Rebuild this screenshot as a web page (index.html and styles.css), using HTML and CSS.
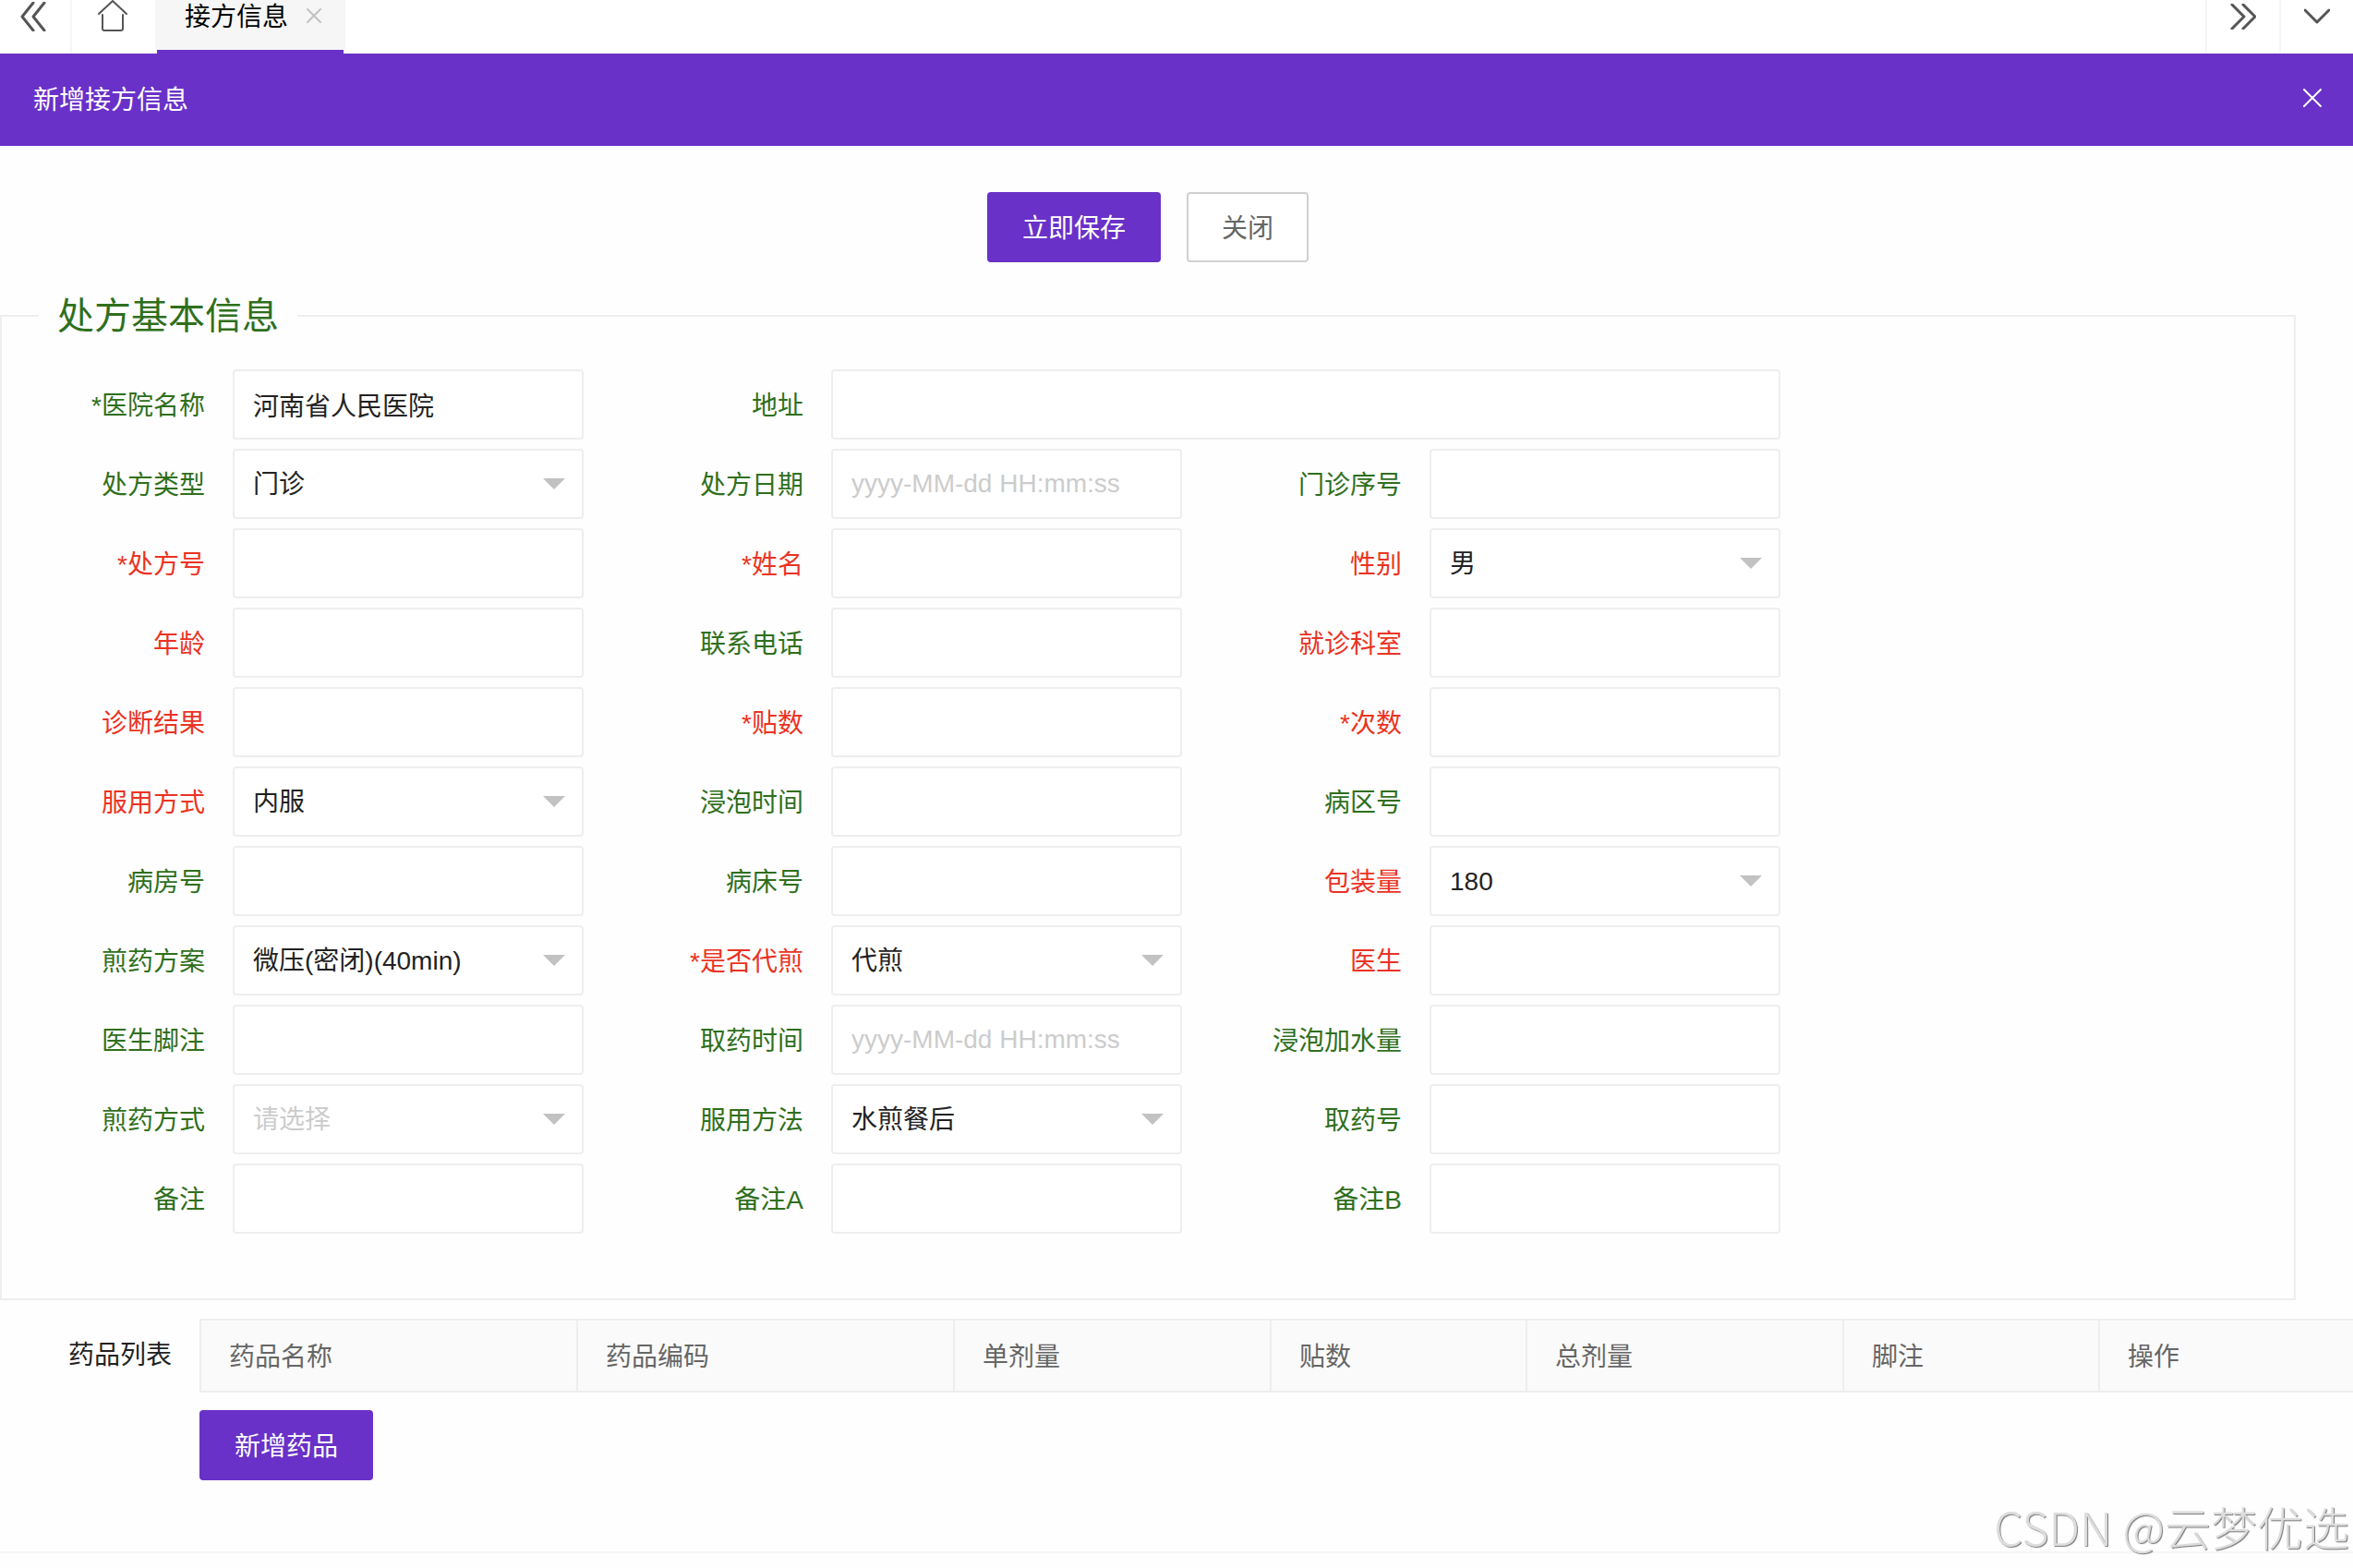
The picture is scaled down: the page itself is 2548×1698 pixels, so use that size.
FILE: index.html
```html
<!DOCTYPE html>
<html lang="zh-CN">
<head>
<meta charset="utf-8">
<title>新增接方信息</title>
<link rel="stylesheet" href="styles.css">
</head>
<body>
<nav class="tabbar">
  <button type="button" class="tab-ctl ctl-prev" aria-label="向左滚动">
    <svg width="28" height="32" viewBox="0 0 28 32"><path d="M14 1L2 16l12 15M26 1L14 16l12 15"/></svg>
  </button>
  <a href="#" class="tab-home" aria-label="主页">
    <svg class="thin" width="32" height="34" viewBox="0 0 32 34"><path d="M1 15L16 1l15 14M5 16v15q0 2 2 2h18q2 0 2-2V16"/></svg>
  </a>
  <div class="tab">
    <a href="#" class="tab-link">接方信息</a>
    <button type="button" class="tab-close" aria-label="关闭标签">
      <svg class="thin" width="16" height="16" viewBox="0 0 16 16"><path d="M1 1l14 14M15 1L1 15"/></svg>
    </button>
  </div>
  <button type="button" class="tab-ctl ctl-next" aria-label="向右滚动">
    <svg width="28" height="28" viewBox="0 0 28 28"><path d="M2 1l13 13L2 27M14 1l13 13-13 13"/></svg>
  </button>
  <button type="button" class="tab-ctl ctl-more" aria-label="更多">
    <svg width="28" height="28" viewBox="0 0 28 28"><path d="M1 7l13 13L27 7"/></svg>
  </button>
</nav>

<header class="dialog-head">
  <h1 class="dialog-title">新增接方信息</h1>
  <button type="button" class="dialog-close" aria-label="关闭">
    <svg width="20" height="20" viewBox="0 0 20 20"><path d="M1 1l18 18M19 1L1 19"/></svg>
  </button>
</header>

<form class="form">
  <div class="actions">
    <button type="button" class="btn">立即保存</button>
    <button type="button" class="btn btn-plain">关闭</button>
  </div>

  <fieldset class="group">
    <legend>处方基本信息</legend>
    <div class="fields">
      <div class="field"><label for="hospital">*医院名称</label><input id="hospital" type="text" value="河南省人民医院"></div>
      <div class="field wide"><label for="address">地址</label><input id="address" type="text"></div>

      <div class="field"><label for="type">处方类型</label><div class="select"><select id="type"><option>门诊</option></select></div></div>
      <div class="field"><label for="date">处方日期</label><input id="date" type="text" placeholder="yyyy-MM-dd HH:mm:ss"></div>
      <div class="field"><label for="serial">门诊序号</label><input id="serial" type="text"></div>

      <div class="field key"><label for="number">*处方号</label><input id="number" type="text"></div>
      <div class="field key"><label for="name">*姓名</label><input id="name" type="text"></div>
      <div class="field key"><label for="sex">性别</label><div class="select"><select id="sex"><option>男</option></select></div></div>

      <div class="field key"><label for="age">年龄</label><input id="age" type="text"></div>
      <div class="field"><label for="phone">联系电话</label><input id="phone" type="text"></div>
      <div class="field key"><label for="dept">就诊科室</label><input id="dept" type="text"></div>

      <div class="field key"><label for="diagnosis">诊断结果</label><input id="diagnosis" type="text"></div>
      <div class="field key"><label for="doses">*贴数</label><input id="doses" type="text"></div>
      <div class="field key"><label for="times">*次数</label><input id="times" type="text"></div>

      <div class="field key"><label for="usage">服用方式</label><div class="select"><select id="usage"><option>内服</option></select></div></div>
      <div class="field"><label for="soak">浸泡时间</label><input id="soak" type="text"></div>
      <div class="field"><label for="ward">病区号</label><input id="ward" type="text"></div>

      <div class="field"><label for="room">病房号</label><input id="room" type="text"></div>
      <div class="field"><label for="bed">病床号</label><input id="bed" type="text"></div>
      <div class="field key"><label for="pack">包装量</label><div class="select"><select id="pack"><option>180</option></select></div></div>

      <div class="field"><label for="plan">煎药方案</label><div class="select"><select id="plan"><option>微压(密闭)(40min)</option></select></div></div>
      <div class="field key"><label for="decoct">*是否代煎</label><div class="select"><select id="decoct"><option>代煎</option></select></div></div>
      <div class="field key"><label for="doctor">医生</label><input id="doctor" type="text"></div>

      <div class="field"><label for="footnote">医生脚注</label><input id="footnote" type="text"></div>
      <div class="field"><label for="pickup">取药时间</label><input id="pickup" type="text" placeholder="yyyy-MM-dd HH:mm:ss"></div>
      <div class="field"><label for="water">浸泡加水量</label><input id="water" type="text"></div>

      <div class="field"><label for="mode">煎药方式</label><div class="select"><select id="mode" class="empty"><option>请选择</option></select></div></div>
      <div class="field"><label for="method">服用方法</label><div class="select"><select id="method"><option>水煎餐后</option></select></div></div>
      <div class="field"><label for="pickno">取药号</label><input id="pickno" type="text"></div>

      <div class="field"><label for="note">备注</label><input id="note" type="text"></div>
      <div class="field"><label for="notea">备注A</label><input id="notea" type="text"></div>
      <div class="field"><label for="noteb">备注B</label><input id="noteb" type="text"></div>
    </div>
  </fieldset>

  <section class="drugs">
    <h2 class="drugs-title" id="drugs-title">药品列表</h2>
    <div class="drugs-body">
      <table class="drug-table" aria-labelledby="drugs-title">
        <colgroup><col class="c-lg"><col class="c-lg"><col class="c-md"><col class="c-sm"><col class="c-md"><col class="c-sm"><col></colgroup>
        <thead>
          <tr><th>药品名称</th><th>药品编码</th><th>单剂量</th><th>贴数</th><th>总剂量</th><th>脚注</th><th>操作</th></tr>
        </thead>
      </table>
      <button type="button" class="btn">新增药品</button>
    </div>
  </section>
</form>
<div class="watermark">CSDN @云梦优选</div>
</body>
</html>
```

FILE: styles.css
```css
* { box-sizing: border-box; }

body {
  margin: 0;
  background: #fefefe;
  color: #222;
  font: 28px/40px "Liberation Sans", "Noto Sans CJK SC", sans-serif;
}

button, input, select { font: inherit; color: inherit; margin: 0; }
button { border: 0; padding: 0; background: none; cursor: pointer; }
a { color: inherit; text-decoration: none; }
svg { display: block; fill: none; stroke: currentColor; stroke-width: 3; stroke-linejoin: round; stroke-linecap: round; }
svg.thin { stroke-width: 2; }

/* tab strip */
.tabbar { display: flex; height: 58px; background: #fff; color: #555; }
.tab-ctl, .tab-home, .tab { display: flex; align-items: center; justify-content: center; padding-bottom: 22px; }
.tab-ctl { width: 80px; border-left: 2px solid #f6f6f6; }
.ctl-prev { width: 78px; padding-right: 4px; border-left: 0; border-right: 2px solid #f6f6f6; }
.ctl-next { margin-left: auto; }
.tab-home { width: 90px; padding-right: 2px; padding-bottom: 24px; }
.tab {
  gap: 20px;
  padding: 0 24px 20px 30px;
  border: 2px solid #f6f6f6;
  border-width: 0 2px;
  background: linear-gradient(#6931c8, #6931c8) bottom / 100% 4px no-repeat #f6f6f6;
  color: #000;
}
.tab-close { padding-bottom: 4px; color: #c2c2c2; }

/* dialog title bar */
.dialog-head {
  display: flex;
  align-items: center;
  justify-content: space-between;
  height: 100px;
  padding: 0 34px 0 36px;
  background: #6931c8;
  color: #fff;
}
.dialog-title { margin: 0; padding-top: 2px; font-size: 28px; font-weight: 400; }
.dialog-close { padding-bottom: 4px; }
.dialog-close svg { stroke-width: 2; }

/* buttons */
.btn {
  height: 76px;
  padding: 4px 38px 0;
  border-radius: 4px;
  background: #6931c8;
  color: #fff;
}
.btn-plain { padding: 4px 36px 0; border: 2px solid #d0d0d0; background: #fff; color: #666; }
.actions { display: flex; justify-content: center; gap: 28px; padding: 50px 62px 0 0; }

/* form */
.group { margin: 28px 62px 20px 0; padding: 28px 0 70px; border: 2px solid #eee; min-width: 0; }
.group legend { margin-left: 40px; padding: 0 20px; font-size: 40px; line-height: 60px; color: #2f6f1c; }
.fields { display: grid; grid-template-columns: repeat(3, 630px); gap: 10px 18px; }
.field { display: grid; grid-template-columns: 250px 1fr; align-items: center; color: #2f6f1c; }
.field.wide { grid-column: span 2; }
.field.key { color: #ea3323; }
.field label { padding: 4px 30px 0 0; text-align: right; }
.field input, .field select {
  width: 100%;
  height: 76px;
  padding: 0 20px;
  border: 2px solid #eee;
  border-radius: 4px;
  background: #fff;
  color: #222;
  outline: 0;
  appearance: none;
}
.field select { padding-top: 2px; }
.field input::placeholder { color: #ccc; opacity: 1; }
.field select.empty { color: #ccc; }
.select { display: grid; align-items: center; }
.select select, .select::after { grid-area: 1 / 1; }
.select::after {
  content: "";
  justify-self: end;
  margin-right: 20px;
  border: 12px solid transparent;
  border-top-color: #c2c2c2;
  border-bottom: 0;
  pointer-events: none;
}

/* drug list */
.drugs { display: grid; grid-template-columns: 216px 1fr; padding-bottom: 77px; border-bottom: 2px solid #f6f6f6; }
.drugs-title { margin: 20px 30px 0 0; font-size: 28px; font-weight: 400; text-align: right; }
.drug-table { width: 100%; margin-bottom: 19px; border-collapse: collapse; table-layout: fixed; background: #fafafa; color: #666; }
.drug-table th { height: 78px; padding: 4px 30px 0; border: 2px solid #eee; border-right: 0; font-weight: 400; text-align: left; }
.c-lg { width: 408px; }
.c-md { width: 343px; }
.c-sm { width: 277px; }

.watermark {
  position: fixed;
  right: 4px;
  bottom: 16px;
  font: 300 50px/60px "Noto Sans CJK SC", sans-serif;
  color: #ddd;
  text-shadow: 1px 1px 1px #777;
}
```
